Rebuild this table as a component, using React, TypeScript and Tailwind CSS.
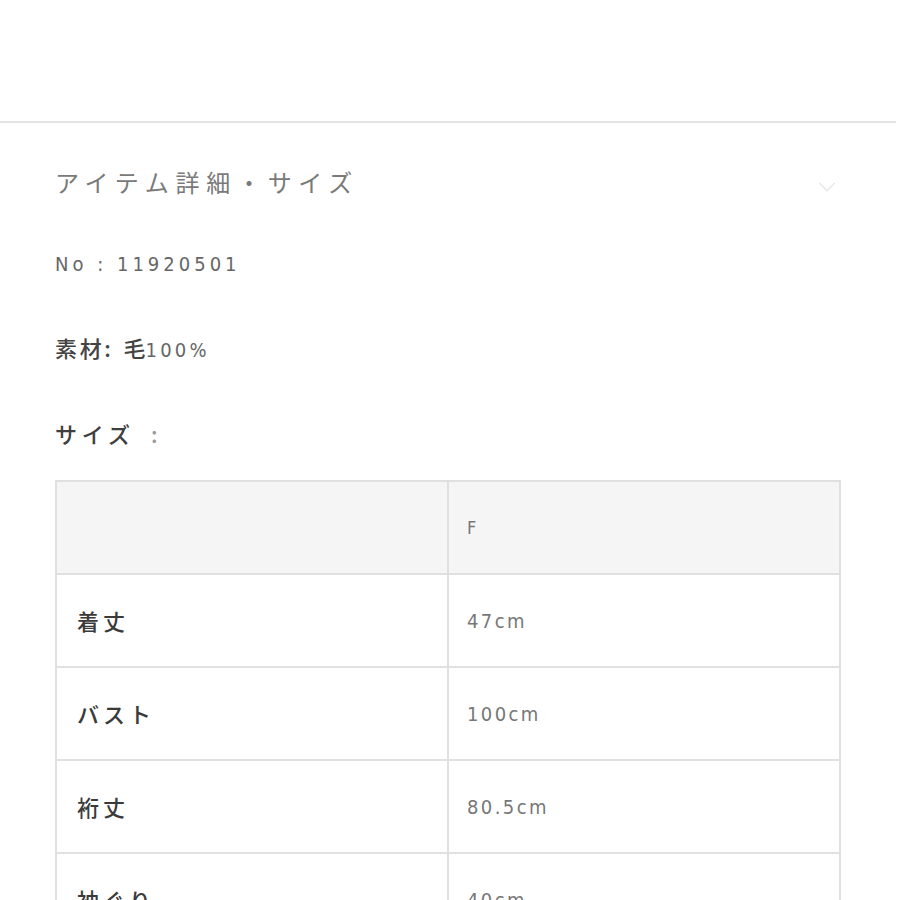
import { ChevronDown } from "lucide-react";

const rows = [
  { label: "着丈", value: "47cm" },
  { label: "バスト", value: "100cm" },
  { label: "裄丈", value: "80.5cm" },
  { label: "袖ぐり", value: "40cm" },
];

const jp = "font-['Noto_Sans_CJK_JP',sans-serif]";
const num = "font-['DejaVu_Sans_Condensed','Noto_Sans_CJK_JP',sans-serif]";

export default function App() {
  return (
    <div className="w-[900px] h-[900px] overflow-hidden bg-white">
      <div className="h-[121px]" />
      <div className="w-[896px] border-t-2 border-[#e4e4e4]">
        <div className="pl-[55px] pr-[60px]">
          <div className="h-[122px] flex items-center justify-between">
            <span className={`${jp} text-[24px] tracking-[0.28em] text-[#7a7a7a] mt-[-4px]`}>
              アイテム詳細・サイズ
            </span>
            <ChevronDown size={30} strokeWidth={1} className="text-[#e6e6e6] mr-[-6px] mt-[6px]" />
          </div>

          <div className={`${num} text-[20px] tracking-[0.2em] text-[#666] leading-none mt-[9px]`}>
            No : 11920501
          </div>

          <div className="mt-[62px] flex items-baseline leading-none text-[#444]">
            <span className={`${jp} text-[22px] tracking-[0.12em] font-medium`}>素材:</span>
            <span className={`${jp} text-[22px] ml-[10px] font-medium`}>毛</span>
            <span className={`${num} text-[20px] tracking-[0.16em] text-[#666]`}>100%</span>
          </div>

          <div className={`${jp} mt-[62px] text-[22px] tracking-[0.22em] text-[#3f3f3f] font-medium leading-none`}>
            サイズ<span className="text-[#999] ml-[16px]">:</span>
          </div>

          <div className="mt-[36px] w-[786px] border-2 border-[#e0e0e0] border-b-0">
            <div className="grid grid-cols-[392px_1fr] h-[93px] bg-[#f5f5f5] border-b-2 border-[#e0e0e0]">
              <div className="border-r-2 border-[#e0e0e0]" />
              <div className={`${num} flex items-center pl-[18px] text-[18px] text-[#777]`}>F</div>
            </div>
            {rows.map((r) => (
              <div
                key={r.label}
                className="grid grid-cols-[392px_1fr] h-[93px] border-b-2 border-[#e0e0e0]"
              >
                <div
                  className={`${jp} border-r-2 border-[#e0e0e0] flex items-center pl-[20px] text-[22px] tracking-[0.18em] text-[#3a3a3a] font-medium`}
                >
                  {r.label}
                </div>
                <div
                  className={`${num} flex items-center pl-[18px] text-[20px] tracking-[0.12em] text-[#777]`}
                >
                  {r.value}
                </div>
              </div>
            ))}
          </div>
        </div>
      </div>
    </div>
  );
}
